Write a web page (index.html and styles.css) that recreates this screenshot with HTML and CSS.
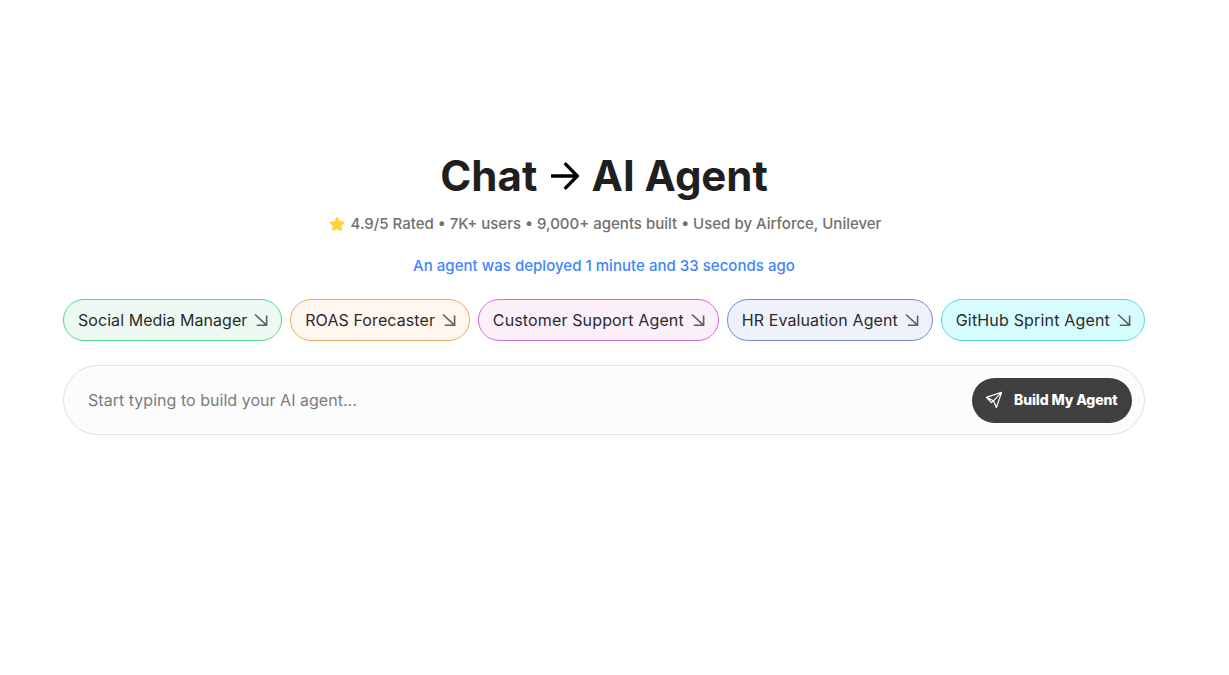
FILE: index.html
```html
<!DOCTYPE html>
<html lang="en">
<head>
    <meta charset="UTF-8">
    <meta name="viewport" content="width=device-width, initial-scale=1.0">
    <title>Chat to AI Agent</title>
    <link rel="stylesheet" href="styles.css">
</head>
<body>

<svg class="sprite" width="0" height="0">
    <symbol id="arrow" viewBox="0 0 14 14">
        <path d="M1 1.5L12.5 12.2M12.6 2.6V12.3H2.8" fill="none" stroke="currentColor" stroke-width="1.6"/>
    </symbol>
</svg>

<main class="hero">
    <h1 class="title">
        <span class="title-start">Chat</span>
        <svg class="title-arrow" width="28" height="28" viewBox="0 0 28 28">
            <path d="M0 14H26M13.7 1.2L26.3 14L13.7 26.8" fill="none" stroke="#000" stroke-width="3.3"/>
        </svg>
        <span class="title-end">AI Agent</span>
    </h1>

    <p class="rating">
        <svg class="star" width="16" height="16" viewBox="0 0 16 16">
            <path d="M8 2L9.9 5.9L14.4 6.5L11.2 9.6L12 13.9L8 12L4 13.9L4.8 9.6L1.6 6.5L6.1 5.9Z" fill="#ffd43b" stroke="#ffd43b" stroke-width="2" stroke-linejoin="round"/>
        </svg>
        <span>4.9/5 Rated • 7K+ users • 9,000+ agents built • Used by Airforce, Unilever</span>
    </p>
    <p class="deployed">An agent was deployed 1 minute and 33 seconds ago</p>

    <div class="chips">
        <a class="chip green">Social Media Manager <svg class="chip-arrow"><use href="#arrow"/></svg></a>
        <a class="chip orange">ROAS Forecaster <svg class="chip-arrow"><use href="#arrow"/></svg></a>
        <a class="chip pink">Customer Support Agent <svg class="chip-arrow"><use href="#arrow"/></svg></a>
        <a class="chip blue">HR Evaluation Agent <svg class="chip-arrow"><use href="#arrow"/></svg></a>
        <a class="chip cyan">GitHub Sprint Agent <svg class="chip-arrow"><use href="#arrow"/></svg></a>
    </div>

    <form class="prompt">
        <input class="prompt-input" type="text" placeholder="Start typing to build your AI agent...">
        <button class="build" type="button">
            <svg width="18" height="18" viewBox="0 0 18 18">
                <path d="M1.4 6.4L16.6 1.4L11.4 16.5L8.4 9.8ZM8.4 9.8L16.6 1.4M1.4 6.4L6.4 11.6L8.4 9.8" fill="none" stroke="#fff" stroke-width="1.2" stroke-linejoin="round"/>
            </svg>
            <span class="build-label">Build My Agent</span>
        </button>
    </form>
</main>

</body>
</html>
```
FILE: styles.css
```css
body {
    margin: 0;
    background-color: #fff;
    font-family: Inter, sans-serif;
    color: #1f1f1f;
}
.sprite {
    display: block;
}
.hero {
    width: 1082px;
    margin-left: 63px;
    padding-top: 150px;
}
.title {
    display: flex;
    justify-content: center;
    align-items: center;
    gap: 13px;
    margin: 0;
    font-size: 42px;
    font-weight: 700;
    line-height: 52px;
}
.title-start {
    letter-spacing: 0.1px;
}
.title-end {
    letter-spacing: -0.05px;
}
.rating {
    display: flex;
    justify-content: center;
    align-items: center;
    gap: 6px;
    margin: 12px 0 0;
    padding-left: 2px;
    font-size: 15px;
    font-weight: 450;
    line-height: 20px;
    color: #707070;
}
.deployed {
    margin: 22px 0 0;
    text-align: center;
    font-size: 15px;
    font-weight: 500;
    letter-spacing: 0.03px;
    line-height: 20px;
    color: #4285fa;
}
.chips {
    display: flex;
    justify-content: space-between;
    margin-top: 23px;
}
.chip {
    display: flex;
    align-items: center;
    gap: 7px;
    box-sizing: border-box;
    height: 42px;
    padding: 0 13px 0 14px;
    border: 1px solid;
    border-radius: 21px;
    font-size: 16px;
    white-space: nowrap;
    color: #2b2b2b;
}
.chip-arrow {
    width: 14px;
    height: 14px;
    color: #5f5f5f;
}
.green {
    background-color: #edfaf3;
    border-color: #55d98b;
    letter-spacing: 0.06px;
}
.orange {
    background-color: #fff6ef;
    border-color: #e8ae5f;
    letter-spacing: 0.09px;
}
.pink {
    background-color: #fbf0fa;
    border-color: #d272d8;
    letter-spacing: 0.14px;
}
.blue {
    background-color: #eff2fb;
    border-color: #7189dc;
    letter-spacing: 0.12px;
}
.cyan {
    background-color: #d6fcfd;
    border-color: #5cd9dc;
    letter-spacing: 0.17px;
}
.prompt {
    display: flex;
    align-items: center;
    box-sizing: border-box;
    height: 70px;
    margin-top: 24px;
    padding: 0 12px 0 24px;
    background-color: #fcfcfc;
    border: 1px solid #e0e0e0;
    border-radius: 35px;
}
.prompt-input {
    flex: 1;
    padding: 0;
    border: 0;
    outline: 0;
    background: none;
    font-family: inherit;
    font-size: 16px;
    letter-spacing: 0.03px;
}
.prompt-input::placeholder {
    color: #7b7b7b;
}
.build {
    display: flex;
    align-items: center;
    gap: 11px;
    width: 160px;
    height: 45px;
    padding: 0 0 0 13px;
    border: 0;
    border-radius: 23px;
    background-color: #3f3f3f;
    color: #fff;
    font-family: inherit;
    font-size: 14px;
    font-weight: 800;
    letter-spacing: -0.12px;
    white-space: nowrap;
}
.build-label {
    padding-bottom: 1px;
}
```
